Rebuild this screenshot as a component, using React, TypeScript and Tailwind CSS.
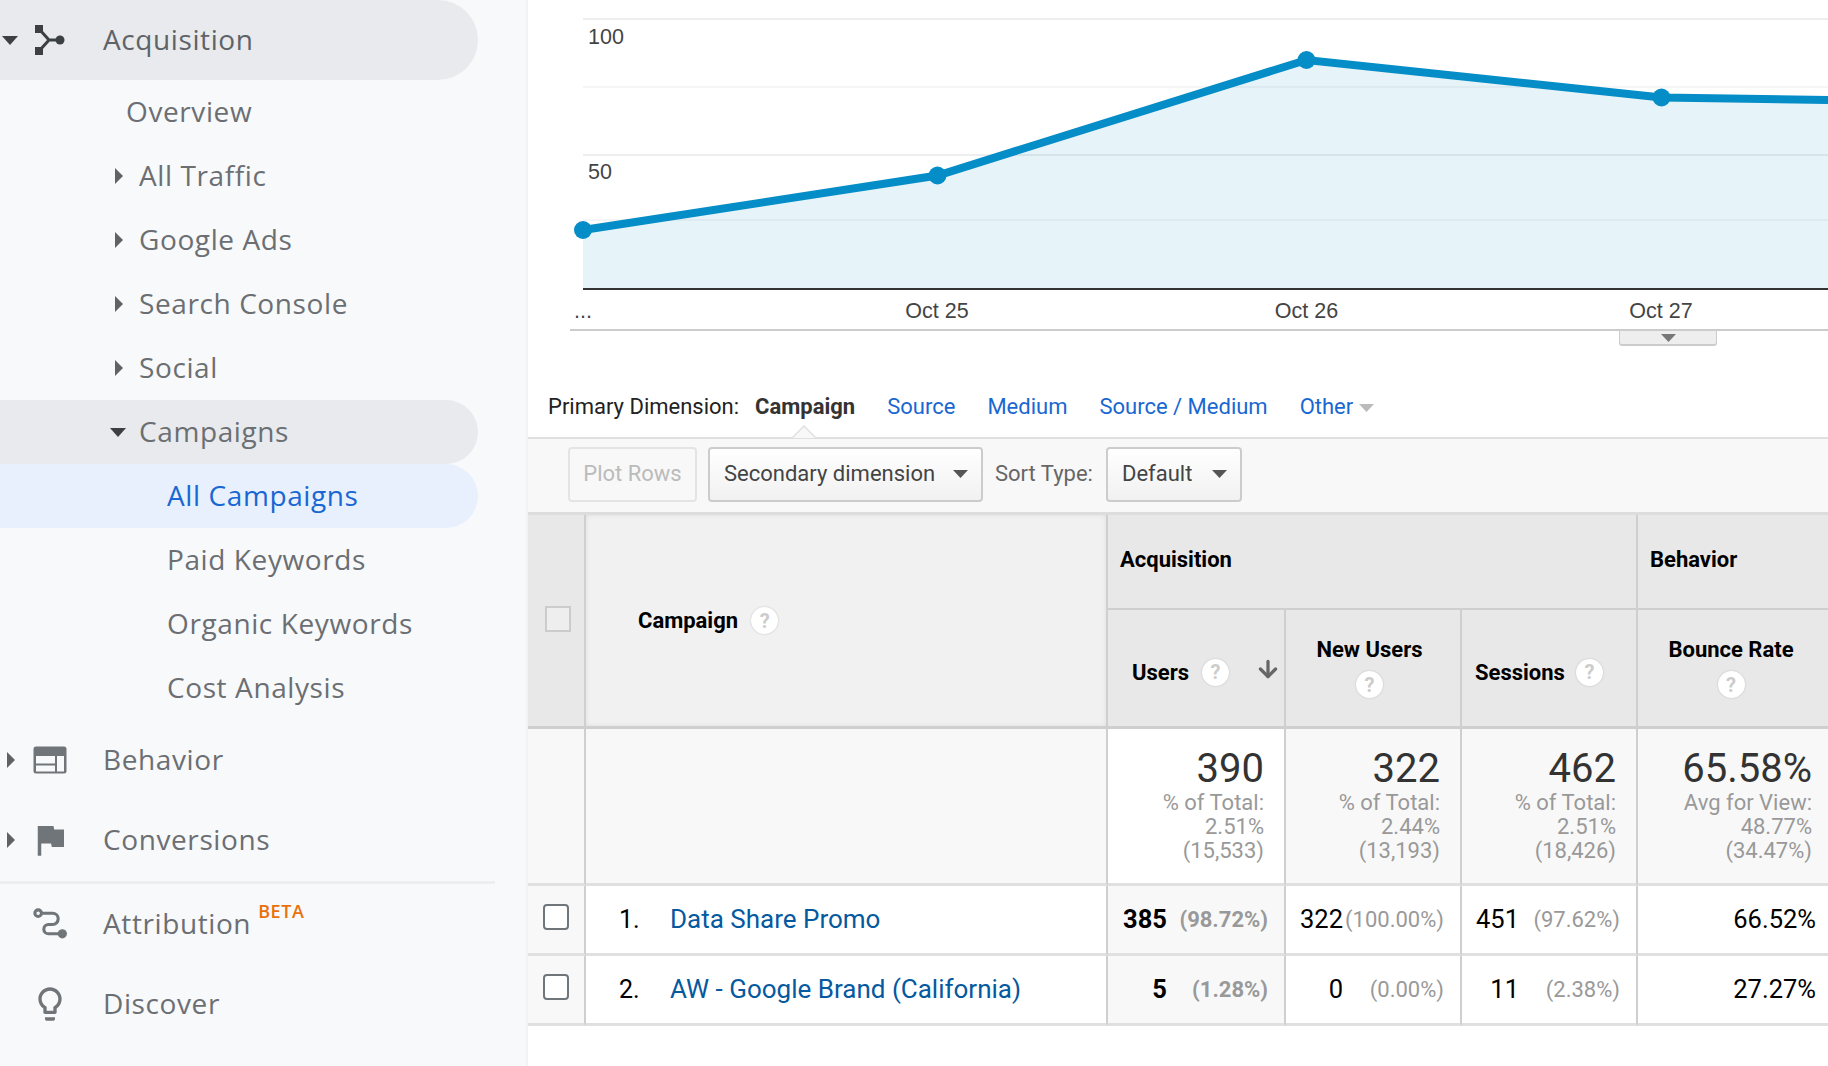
import { ArrowDown } from "lucide-react";
import type { ReactNode } from "react";

const Right = ({ className = "" }: { className?: string }) => (
  <svg width="8" height="16" viewBox="0 0 8 16" className={`shrink-0 ${className}`}>
    <path d="M0 0l8 8-8 8z" fill="#5f6368" />
  </svg>
);

const Down = ({ className = "" }: { className?: string }) => (
  <svg width="16" height="9" viewBox="0 0 16 9" className={`shrink-0 ${className}`}>
    <path d="M0 0h16L8 9z" fill="#3c4043" />
  </svg>
);

const AcquisitionIcon = () => (
  <svg width="30" height="30" viewBox="0 0 30 30" className="shrink-0">
    <rect x="0" y="0" width="8" height="8" fill="#3c4043" />
    <rect x="0" y="22" width="8" height="8" fill="#3c4043" />
    <circle cx="25" cy="15" r="4.5" fill="#3c4043" />
    <path d="M5 5l9 10-9 10M14 15h10" stroke="#3c4043" strokeWidth="3" fill="none" />
  </svg>
);

const BehaviorIcon = () => (
  <svg width="34" height="28" viewBox="0 0 34 28" className="shrink-0">
    <rect x="0.5" y="0.5" width="33" height="27" rx="2.5" fill="#70757a" />
    <rect x="3" y="10" width="19" height="7.5" fill="#f8f9fa" />
    <rect x="3" y="19.5" width="19" height="6" fill="#f8f9fa" />
    <rect x="24" y="10" width="7" height="15.5" fill="#f8f9fa" />
  </svg>
);

const FlagIcon = () => (
  <svg width="42" height="42" viewBox="0 0 24 24" className="shrink-0">
    <path d="M14.4 6L14 4H5v17h2v-7h5.6l.4 2h7V6z" fill="#70757a" />
  </svg>
);

const AttributionIcon = () => (
  <svg width="37" height="37" viewBox="0 0 36 36" fill="none" stroke="#70757a" strokeWidth="3" className="shrink-0">
    <circle cx="6" cy="7" r="3.2" />
    <path d="M9.5 7H20a5.5 5.5 0 0 1 0 11h-4a4.5 4.5 0 0 0 0 9h10" />
    <circle cx="29.5" cy="27" r="4.5" fill="#70757a" stroke="none" />
  </svg>
);

const BulbIcon = () => (
  <svg width="40" height="40" viewBox="0 0 24 24" className="shrink-0">
    <path
      d="M9 21c0 .55.45 1 1 1h4c.55 0 1-.45 1-1v-1H9v1zm3-19C8.14 2 5 5.14 5 9c0 2.38 1.19 4.47 3 5.74V17c0 .55.45 1 1 1h6c.55 0 1-.45 1-1v-2.26c1.81-1.27 3-3.36 3-5.74 0-3.86-3.14-7-7-7zm2.85 11.1l-.85.6V16h-4v-2.3l-.85-.6C7.8 12.16 7 10.63 7 9c0-2.76 2.24-5 5-5s5 2.24 5 5c0 1.63-.8 3.16-2.15 4.1z"
      fill="#70757a"
    />
  </svg>
);

function TopItem({ caret, icon, label, active, extra }: { caret?: ReactNode; icon: ReactNode; label: string; active?: boolean; extra?: ReactNode }) {
  return (
    <div className={`flex h-[80px] w-[478px] items-center rounded-r-[40px] ${active ? "bg-[#e8eaed] text-[#5f6368]" : "text-[#6b6f73]"}`}>
      <div className="flex w-[33px] items-center justify-center">{caret}</div>
      <div className="flex w-[34px] items-center justify-center">{icon}</div>
      <span className="mb-[2px] ml-[36px]">{label}</span>
      {extra}
    </div>
  );
}

function SubItem({ label, caret, active }: { label: string; caret?: "right" | "down"; active?: boolean }) {
  return (
    <div className={`flex h-[64px] w-[478px] items-center rounded-r-[32px] pl-[110px] text-[#6b6f73] ${active ? "bg-[#e8eaed]" : ""}`}>
      <div className="flex w-[29px] items-center">
        {caret === "right" && <Right className="ml-[5px]" />}
        {caret === "down" && <Down />}
      </div>
      <span className="mb-[2px]">{label}</span>
    </div>
  );
}

function Leaf({ label, active }: { label: string; active?: boolean }) {
  return (
    <div className={`flex h-[64px] w-[478px] items-center rounded-r-[32px] pb-[2px] pl-[167px] ${active ? "bg-[#e8f0fe] text-[#1967d2]" : "text-[#6b6f73]"}`}>
      {label}
    </div>
  );
}

function Sidebar() {
  return (
    <div className="h-[1066px] w-[528px] shrink-0 border-r-[2px] border-[#f1f3f4] bg-[#f8f9fa] font-['Open_Sans',sans-serif] text-[28px] tracking-[0.6px]">
      <TopItem active caret={<Down className="-ml-[14px]" />} icon={<AcquisitionIcon />} label="Acquisition" />
      <div className="flex h-[64px] items-center pb-[2px] pl-[126px] text-[#6b6f73]">Overview</div>
      <SubItem caret="right" label="All Traffic" />
      <SubItem caret="right" label="Google Ads" />
      <SubItem caret="right" label="Search Console" />
      <SubItem caret="right" label="Social" />
      <SubItem caret="down" label="Campaigns" active />
      <Leaf label="All Campaigns" active />
      <Leaf label="Paid Keywords" />
      <Leaf label="Organic Keywords" />
      <Leaf label="Cost Analysis" />
      <TopItem caret={<Right className="-ml-[11px]" />} icon={<BehaviorIcon />} label="Behavior" />
      <TopItem caret={<Right className="-ml-[11px]" />} icon={<FlagIcon />} label="Conversions" />
      <div className="mt-[1px] h-[3px] w-[495px] bg-[#eeeeee]" />
      <TopItem
        icon={<AttributionIcon />}
        label="Attribution"
        extra={<span className="mb-[26px] ml-[7px] text-[18px] font-semibold text-[#e8710a]">BETA</span>}
      />
      <TopItem icon={<BulbIcon />} label="Discover" />
    </div>
  );
}

function Chart() {
  const pts = "55,230 409.5,175.5 778.5,60 1133.5,97.5 1300,100";
  return (
    <svg width="1300" height="331" viewBox="0 0 1300 331" className="block font-['Liberation_Sans',sans-serif]">
      {[19, 87, 155, 220].map((y) => (
        <line key={y} x1="55" x2="1300" y1={y} y2={y} stroke={y === 87 || y === 220 ? "#f5f5f5" : "#eeeeee"} strokeWidth="2" />
      ))}
      <polygon points={`55,288 ${pts} 1300,288`} fill="#058dc7" fillOpacity="0.1" />
      <line x1="55" x2="1300" y1="289" y2="289" stroke="#333333" strokeWidth="2" />
      <polyline points={pts} fill="none" stroke="#058dc7" strokeWidth="8" />
      {[[55, 230], [409.5, 175.5], [778.5, 60], [1133.5, 97.5]].map(([x, y]) => (
        <circle key={x} cx={x} cy={y} r="9" fill="#058dc7" />
      ))}
      <g fontSize="21.5" fill="#444444">
        <text x="60" y="44">100</text>
        <text x="60" y="179">50</text>
        <text x="55" y="318" textAnchor="middle">...</text>
        <text x="409" y="318" textAnchor="middle">Oct 25</text>
        <text x="778.5" y="318" textAnchor="middle">Oct 26</text>
        <text x="1133" y="318" textAnchor="middle">Oct 27</text>
      </g>
      <line x1="42" x2="1300" y1="330" y2="330" stroke="#cccccc" strokeWidth="2" />
    </svg>
  );
}

function Select({ label, className }: { label: string; className: string }) {
  return (
    <div className={`flex h-[55px] items-center justify-between rounded-[4px] border-2 border-[#cccccc] bg-linear-to-b from-white to-[#f1f1f1] pr-[13px] pl-[14px] text-[#444444] ${className}`}>
      <span className="mb-[2px]">{label}</span>
      <svg width="15" height="8" viewBox="0 0 15 8">
        <path d="M0 0h15L7.5 8z" fill="#555555" />
      </svg>
    </div>
  );
}

const Help = ({ className = "" }: { className?: string }) => (
  <span className={`flex h-[27px] w-[27px] items-center justify-center rounded-full bg-white text-[20px] font-bold text-[#cccccc] shadow-[0_0_2px_#bbbbbb] ${className}`}>?</span>
);

function Total({ value, lines, white }: { value: string; lines: string[]; white?: boolean }) {
  return (
    <div className={`flex flex-col items-end border-r-2 border-b-[3px] border-[#cfcfcf] border-b-[#e0e0e0] pt-[18px] pr-[20px] ${white ? "bg-white" : "bg-[#f8f8f8]"}`}>
      <div className="text-[40px] leading-[44px] text-[#333333]">{value}</div>
      <div className="text-right text-[22px] leading-[24px] text-[#999999]">
        {lines.map((l) => (
          <div key={l}>{l}</div>
        ))}
      </div>
    </div>
  );
}

function Metric({ value, pct, bold, shade }: { value: string; pct: string; bold?: boolean; shade?: boolean }) {
  return (
    <div className={`flex items-center justify-end border-r-2 border-b-[3px] border-[#cfcfcf] border-b-[#e0e0e0] pr-[16px] ${shade ? "bg-[#f8f8f8]" : "bg-white"}`}>
      <span className={`text-[25.5px] text-black ${bold ? "font-bold" : ""}`}>{value}</span>
      <span className={`w-[101px] text-right text-[22px] text-[#999999] ${bold ? "font-bold" : ""}`}>{pct}</span>
    </div>
  );
}

function DataRow({ n, name, users, newUsers, sessions, bounce }: { n: string; name: string; users: string[]; newUsers: string[]; sessions: string[]; bounce: string }) {
  return (
    <>
      <div className="flex items-center justify-center border-r-2 border-b-[3px] border-[#cfcfcf] border-b-[#e0e0e0] bg-[#f8f8f8] pr-[1px] pb-[5px]">
        <div className="h-[26px] w-[26px] rounded-[4px] border-2 border-[#70757a] bg-white" />
      </div>
      <div className="flex items-center border-r-2 border-b-[3px] border-[#cfcfcf] border-b-[#e0e0e0] bg-white pl-[33px] text-[26px]">
        <span className="w-[51px] text-[25px] text-black">{n}</span>
        <span className="text-[#05599f]">{name}</span>
      </div>
      <Metric value={users[0]} pct={users[1]} bold shade />
      <Metric value={newUsers[0]} pct={newUsers[1]} />
      <Metric value={sessions[0]} pct={sessions[1]} />
      <div className="flex items-center justify-end border-b-[3px] border-b-[#e0e0e0] bg-white pr-[12px] text-[25.5px] text-black">{bounce}</div>
    </>
  );
}

function Table() {
  return (
    <div className="grid grid-cols-[58px_522px_178px_176px_176px_190px] grid-rows-[95px_119px_157px_70px_70px] border-t-[3px] border-[#dddddd] text-[22px] font-bold text-black">
      <div className="row-span-2 flex items-center justify-center border-r-2 border-b-[3px] border-[#cfcfcf] bg-[#e8e8e8] pb-[4px] pl-[3px]">
        <div className="h-[26px] w-[26px] border-2 border-[#cccccc] bg-[#eeeeee]" />
      </div>
      <div className="row-span-2 flex items-center gap-[13px] border-r-2 border-b-[3px] border-[#cfcfcf] bg-[#f1f1f1] pl-[52px] shadow-[inset_0_0_5px_#dddddd]">
        Campaign <Help />
      </div>
      <div className="col-span-3 flex items-center border-r-2 border-b-2 border-[#cfcfcf] bg-[#e8e8e8] pb-[4px] pl-[12px]">Acquisition</div>
      <div className="flex items-center border-b-2 border-[#cfcfcf] bg-[#e8e8e8] pb-[4px] pl-[12px]">Behavior</div>

      <div className="relative flex items-center gap-[13px] border-r-2 border-b-[3px] border-[#cfcfcf] bg-[#e8e8e8] pt-[8px] pl-[24px]">
        Users <Help />
        <ArrowDown className="absolute top-[46px] left-[147px] h-[26px] w-[26px] text-[#666666]" strokeWidth={3} />
      </div>
      <div className="flex flex-col items-center justify-center gap-[5px] border-r-2 border-b-[3px] border-[#cfcfcf] bg-[#e8e8e8] pr-[7px] pb-[5px]">
        New Users <Help />
      </div>
      <div className="flex items-center gap-[11px] border-r-2 border-b-[3px] border-[#cfcfcf] bg-[#e8e8e8] pt-[8px] pl-[13px]">
        Sessions <Help />
      </div>
      <div className="flex flex-col items-center justify-center gap-[5px] border-b-[3px] border-[#cfcfcf] bg-[#e8e8e8] pr-[4px] pb-[5px]">
        Bounce Rate <Help />
      </div>

      <div className="border-r-2 border-b-[3px] border-[#cfcfcf] border-b-[#e0e0e0] bg-[#f8f8f8]" />
      <div className="border-r-2 border-b-[3px] border-[#cfcfcf] border-b-[#e0e0e0] bg-[#f8f8f8]" />
      <div className="contents font-normal">
        <Total value="390" lines={["% of Total:", "2.51%", "(15,533)"]} white />
        <Total value="322" lines={["% of Total:", "2.44%", "(13,193)"]} />
        <Total value="462" lines={["% of Total:", "2.51%", "(18,426)"]} />
        <div className="flex flex-col items-end border-b-[3px] border-b-[#e0e0e0] bg-[#f8f8f8] pt-[18px] pr-[16px]">
          <div className="text-[40px] leading-[44px] text-[#333333]">65.58%</div>
          <div className="text-right text-[22px] leading-[24px] text-[#999999]">
            <div>Avg for View:</div>
            <div>48.77%</div>
            <div>(34.47%)</div>
          </div>
        </div>
        <DataRow n="1." name="Data Share Promo" users={["385", "(98.72%)"]} newUsers={["322", "(100.00%)"]} sessions={["451", "(97.62%)"]} bounce="66.52%" />
        <DataRow n="2." name="AW - Google Brand (California)" users={["5", "(1.28%)"]} newUsers={["0", "(0.00%)"]} sessions={["11", "(2.38%)"]} bounce="27.27%" />
      </div>
    </div>
  );
}

export default function App() {
  return (
    <div className="flex h-[1066px] w-[1828px] overflow-hidden bg-white font-['Roboto',sans-serif]">
      <Sidebar />
      <div className="w-[1300px] shrink-0 font-['Roboto',sans-serif]">
        <Chart />
        <div className="ml-[1091px] flex h-[15px] w-[98px] items-start justify-center rounded-b-[3px] border-x border-b-2 border-[#cccccc] bg-[#eeeeee] pt-[3px]">
          <svg width="15" height="8" viewBox="0 0 15 8">
            <path d="M0 0h15L7.5 8z" fill="#777777" />
          </svg>
        </div>
        {/* Primary dimension links */}
        <div className="flex h-[91px] items-center pt-[45px] pb-[16px] pl-[20px] text-[22px] text-[#1967d2]">
          <span className="mr-[16px] text-[#222222]">Primary Dimension:</span>
          <span className="mr-[32px] font-bold text-[#333333]">Campaign</span>
          <span className="mr-[32px]">Source</span>
          <span className="mr-[32px]">Medium</span>
          <span className="mr-[32px]">Source / Medium</span>
          <span>Other</span>
          <svg width="15" height="8" viewBox="0 0 15 8" className="mt-[3px] ml-[6px]">
            <path d="M0 0h15L7.5 8z" fill="#bbbbbb" />
          </svg>
        </div>
        {/* Toolbar */}
        <div className="relative flex h-[75px] items-center border-t-2 border-[#e0e0e0] bg-[#f8f8f8] pb-[3px] pl-[40px] text-[22px]">
          <svg width="24" height="13" viewBox="0 0 24 13" className="absolute -top-[14px] left-[264px]">
            <path d="M0 13L12 1l12 12" fill="#f8f8f8" stroke="#e0e0e0" strokeWidth="1.5" />
          </svg>
          <div className="flex h-[55px] w-[129px] items-center justify-center rounded-[4px] border-2 border-[#e4e4e4] pb-[2px] text-[#bbbbbb]">Plot Rows</div>
          <Select label="Secondary dimension" className="ml-[11px] w-[275px]" />
          <span className="mx-[12px] mb-[2px] text-[#666666]">Sort Type:</span>
          <Select label="Default" className="ml-[1px] w-[136px]" />
        </div>
        <Table />
      </div>
    </div>
  );
}
